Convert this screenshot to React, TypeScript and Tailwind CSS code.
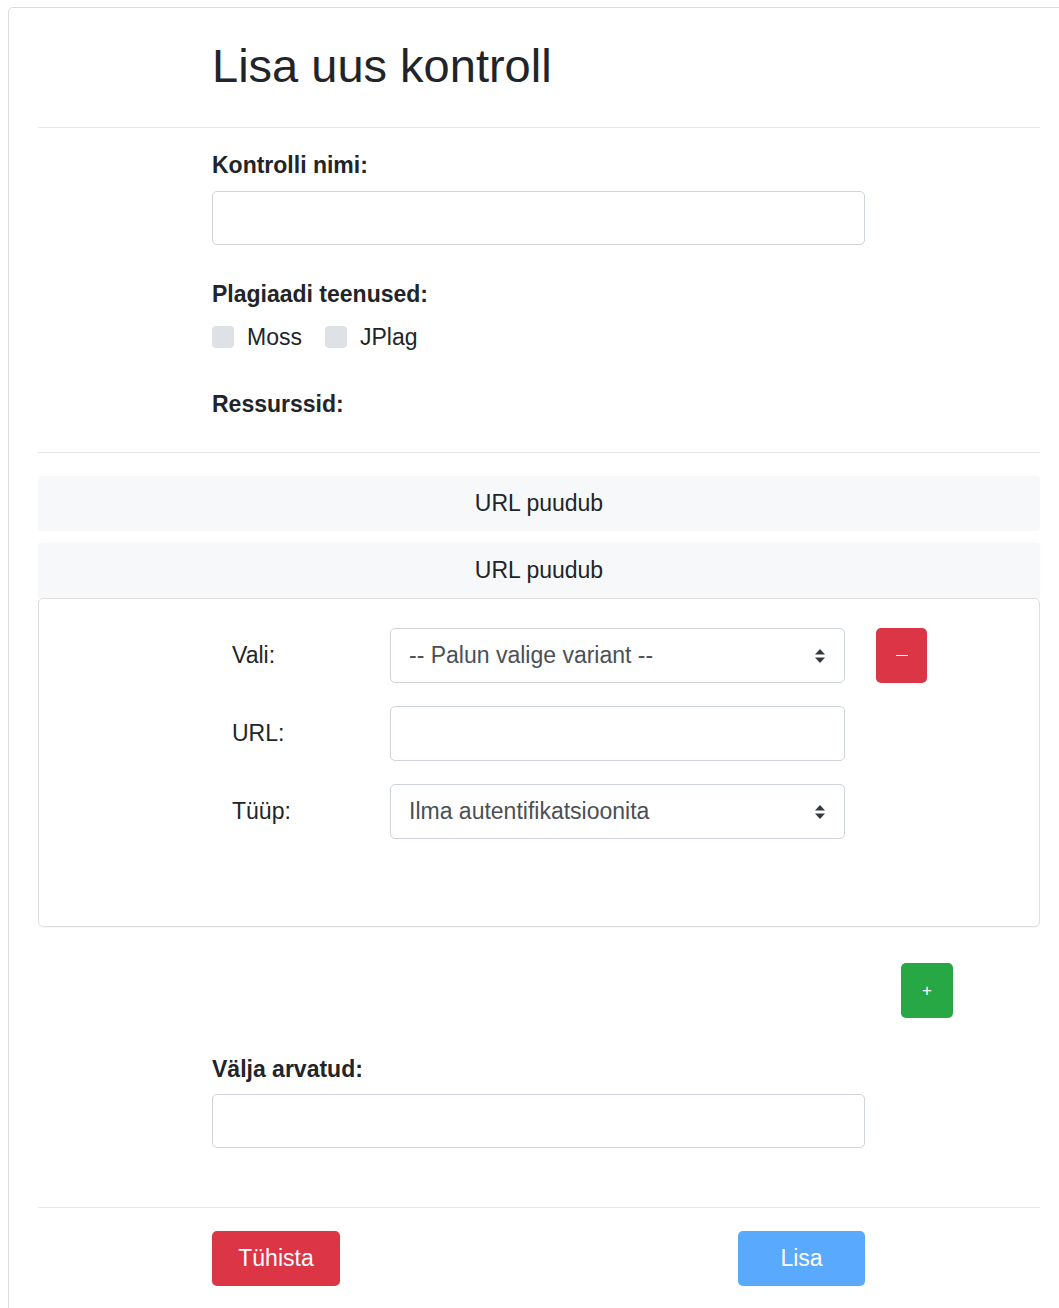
import type { ReactNode } from "react";

const font = { fontFamily: '"Liberation Sans", Arial, sans-serif' };

const Label = ({ children, className = "" }: { children: ReactNode; className?: string }) => (
  <div className={`text-[23px] leading-[34px] font-bold text-[#212529] ${className}`}>{children}</div>
);

const TextInput = ({ className = "" }: { className?: string }) => (
  <div className={`h-[54px] w-full rounded-[5px] border border-[#ced4da] bg-white ${className}`} />
);

const SelectArrows = () => (
  <svg width="12" height="16" viewBox="0 0 12 16" className="shrink-0">
    <path d="M6 1 L11 6.5 H1 Z" fill="#343a40" />
    <path d="M6 15 L11 9.5 H1 Z" fill="#343a40" />
  </svg>
);

const SelectBox = ({ value }: { value: string }) => (
  <div className="flex h-[55px] w-[455px] items-center justify-between rounded-[5px] border border-[#ced4da] bg-white pl-[18px] pr-[18px] text-[23px] text-[#495057]">
    <span>{value}</span>
    <SelectArrows />
  </div>
);

const Checkbox = ({ label }: { label: string }) => (
  <label className="flex items-center gap-[13px]">
    <span className="h-[22px] w-[22px] rounded-[4px] bg-[#dee2e6]" />
    <span className="text-[23px] text-[#212529]">{label}</span>
  </label>
);

const ResourceRow = ({ label, children }: { label: string; children: ReactNode }) => (
  <div className="flex h-[55px] items-center">
    <div className="w-[158px] text-[23px] text-[#212529]">{label}</div>
    {children}
  </div>
);

export default function App() {
  return (
    <div className="h-[1308px] w-[1059px] overflow-hidden bg-white pl-2 pt-[7px]" style={font}>
      <div className="w-[1062px] rounded-[5px] border border-[#dcdcdc] px-[29px] pb-10">
        <div className="ml-[174px] mt-[30px] w-[653px]">
          <h2 className="text-[47px] leading-[55px] font-normal text-[#212529]">Lisa uus kontroll</h2>
        </div>
        <hr className="mt-[34px] border-t border-[#e6e6e6]" />

        <div className="ml-[174px] w-[653px]">
          <Label className="mt-[20px]">Kontrolli nimi:</Label>
          <TextInput className="mt-[9px]" />

          <Label className="mt-[32px]">Plagiaadi teenused:</Label>
          <div className="mt-[9px] flex h-[34px] items-center gap-[23px]">
            <Checkbox label="Moss" />
            <Checkbox label="JPlag" />
          </div>

          <Label className="mt-[33px]">Ressurssid:</Label>
        </div>
        <hr className="mt-[31px] border-t border-[#e6e6e6]" />

        <div className="mt-[23px] flex h-[55px] items-center justify-center rounded-[4px] bg-[#f7f8f9] text-[23px] text-[#212529]">
          URL puudub
        </div>
        <div className="mt-[12px] flex h-[55px] items-center justify-center rounded-t-[4px] bg-[#f7f8f9] text-[23px] text-[#212529] shadow-[0_-3px_4px_rgba(0,0,0,0.015)]">
          URL puudub
        </div>
        <div className="h-[329px] rounded-[5px] border border-[#dfdfdf] pl-[193px] pt-[29px] shadow-[0_1px_1px_rgba(0,0,0,0.04)]">
          <div className="flex flex-col gap-[23px]">
            <ResourceRow label="Vali:">
              <SelectBox value="-- Palun valige variant --" />
              <button className="ml-[31px] flex h-[55px] w-[51px] items-center justify-center rounded-[5px] bg-[#dc3545]">
                <span className="block h-[1.5px] w-[12px] bg-white" />
              </button>
            </ResourceRow>
            <ResourceRow label="URL:">
              <div className="h-[55px] w-[455px] rounded-[5px] border border-[#ced4da] bg-white" />
            </ResourceRow>
            <ResourceRow label="Tüüp:">
              <SelectBox value="Ilma autentifikatsioonita" />
            </ResourceRow>
          </div>
        </div>

        <button className="ml-[863px] mt-[36px] flex h-[55px] w-[52px] items-center justify-center rounded-[5px] bg-[#28a745] text-[17px] leading-none text-white">
          +
        </button>

        <div className="ml-[174px] w-[653px]">
          <Label className="mt-[34px]">Välja arvatud:</Label>
          <TextInput className="mt-[8px]" />
        </div>
        <hr className="mt-[59px] border-t border-[#e6e6e6]" />

        <div className="ml-[174px] mt-[23px] flex w-[653px] justify-between">
          <button className="h-[55px] w-[128px] rounded-[5px] bg-[#dc3545] text-[23px] text-white">Tühista</button>
          <button className="h-[55px] w-[127px] rounded-[5px] bg-[#59a9ff] text-[23px] text-white">Lisa</button>
        </div>
      </div>
    </div>
  );
}
